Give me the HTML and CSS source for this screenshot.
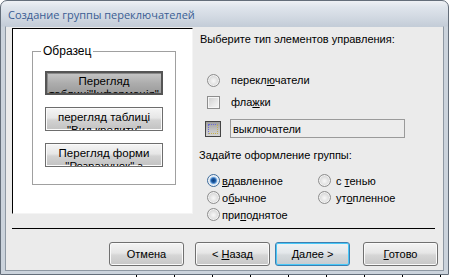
FILE: index.html
```html
<!DOCTYPE html>
<html lang="ru">
<head>
<meta charset="utf-8">
<title>Создание группы переключателей</title>
<link rel="stylesheet" href="styles.css">
</head>
<body>
<div class="window">
  <div class="titlebar">Создание группы переключателей</div>
  <div class="client">
    <div class="main">
      <div class="preview">
        <fieldset class="sample">
          <legend>Образец</legend>
          <div class="tbtn pressed"><span>Перегляд<br>таблиці"Інформація"</span></div>
          <div class="tbtn"><span>перегляд таблиці<br>"Вид кредиту"</span></div>
          <div class="tbtn"><span>Перегляд форми<br>"Розрахунок" з</span></div>
        </fieldset>
      </div>
      <div class="options">
        <div class="heading">Выберите тип элементов управления:</div>
        <div class="opt row-radio"><span class="radio"></span><span class="lbl">перекл<u>ю</u>чатели</span></div>
        <div class="opt row-check"><span class="check"></span><span class="lbl">фла<u>ж</u>ки</span></div>
        <div class="opt row-toggle"><span class="toggle"><span class="focus"></span></span><span class="field">выключатели</span></div>
        <div class="heading heading2">Задайте оформление группы:</div>
        <div class="styles">
          <div class="sopt"><span class="radio on"></span><span class="slbl"><u>в</u>давленное</span></div>
          <div class="sopt col2"><span class="radio"></span><span class="slbl">с <u>т</u>енью</span></div>
          <div class="sopt"><span class="radio"></span><span class="slbl">о<u>б</u>ычное</span></div>
          <div class="sopt col2"><span class="radio"></span><span class="slbl">ут<u>о</u>пленное</span></div>
          <div class="sopt"><span class="radio"></span><span class="slbl">при<u>п</u>однятое</span></div>
        </div>
      </div>
    </div>
    <div class="sep"></div>
    <div class="buttons">
      <button class="btn">Отмена</button>
      <button class="btn back">&lt; <u>Н</u>азад</button>
      <button class="btn next"><u>Д</u>алее &gt;</button>
      <button class="btn done"><u>Г</u>отово</button>
    </div>
  </div>
</div>
</body>
</html>
```
FILE: styles.css
```css
* { box-sizing: border-box; }
html, body { margin: 0; padding: 0; }
body {
  width: 451px;
  height: 277px;
  background-color: #ffffff;
  background-image:
    linear-gradient(#fff, #fff),
    linear-gradient(to right, #000 0, #000 1px, transparent 1px);
  background-size: 130px 3px, 38px 3px;
  background-position: 0 100%, 136px 100%;
  background-repeat: no-repeat, repeat-x;
  font-family: "Liberation Sans", Arial, sans-serif;
  font-size: 11px;
  color: #000;
  overflow: hidden;
}
.window {
  width: 449px;
  height: 275px;
  border: 1px solid #646e7a;
  border-radius: 7px 7px 0 0;
  background: linear-gradient(to bottom, #eef1f5 0px, #dfe5ec 6px, #d2d9e2 16px, #c4cdd8 25px, #cbd3dc 26px, #cbd3dc 100%);
  display: flex;
  flex-direction: column;
}
.titlebar {
  height: 25px;
  padding: 6px 0 0 7px;
  font-family: "Open Sans", "Noto Sans", sans-serif;
  font-size: 11px;
  color: #3a5e94;
  white-space: nowrap;
}
.client {
  flex: 1;
  margin: 0 4px 3px 4px;
  border: 1px solid #8e98a3;
  border-top-color: #c4cdd8;
  background: #ebebeb;
  padding: 1px 0 0 6px;
  display: flex;
  flex-direction: column;
}
.main { display: flex; height: 186px; }
.preview {
  width: 181px;
  height: 186px;
  background: #fff;
  border-top: 1px solid #000;
  border-left: 1px solid #000;
  border-right: 1px solid #f4f4f4;
  border-bottom: 1px solid #f4f4f4;
  padding-left: 19px;
}
.sample {
  margin: 15px 0 0 0;
  width: 144px;
  height: 141px;
  border: 1px solid #a0a0a0;
  padding: 0 12px;
}
.sample legend {
  margin-left: -4px;
  padding: 0 2px;
  line-height: 14px;
  font-size: 12px;
}
.tbtn {
  width: 118px;
  height: 24px;
  margin-top: 12px;
  overflow: hidden;
  text-align: center;
  line-height: 13px;
  padding-top: 3px;
  border: 1px solid #6d6d6d;
  background: linear-gradient(to bottom, #f5f5f5 0%, #e6e6e6 45%, #d2d2d2 55%, #c2c2c2 100%);
  box-shadow: inset 0 0 0 1px #fbfbfb;
  white-space: nowrap;
  font-size: 11.5px;
}
.tbtn.pressed {
  margin-top: 13px;
  border: 2px solid #555;
  padding-top: 2px;
  background: linear-gradient(to bottom, #c6c6c6 0%, #adadad 50%, #9c9c9c 100%);
  box-shadow: inset 1px 1px 0 #8a8a8a;
}
.options {
  margin-left: 7px;
  padding-top: 4px;
  flex: 1;
}
.heading { line-height: 14px; margin-left: 0; white-space: nowrap; }
.opt { display: flex; align-items: center; }
.row-radio { margin-top: 26px; height: 16px; }
.row-check { margin-top: 6px; height: 16px; }
.row-toggle { margin-top: 9px; height: 19px; }
.heading2 { margin-top: 10px; margin-left: -1px; }
.radio {
  width: 13px;
  height: 13px;
  border-radius: 50%;
  border: 1px solid #8d8d8d;
  background: radial-gradient(circle at 50% 55%, #f8f8f8 0, #e6e6e6 3px, #d0d0d0 6px);
  box-shadow: inset 0 0 0 1px #f3f3f3;
  flex: none;
}
.radio.on {
  border-color: #3d6b9b;
  background: radial-gradient(circle at 50% 50%, #0d3c78 0, #1c5aa3 2px, #6fa4dc 3.2px, #cfe2f5 4px, #eef4fb 6px);
}
.opt .radio { margin-left: 7px; }
.check {
  width: 13px;
  height: 13px;
  margin-left: 7px;
  border: 1px solid #8d8d8d;
  background: linear-gradient(135deg, #cdcdcd 0%, #e9e9e9 60%, #f7f7f7 100%);
  box-shadow: inset 0 0 0 1px #f6f6f6;
  flex: none;
}
.lbl { margin-left: 11px; }
.toggle {
  width: 16px;
  height: 16px;
  margin-left: 5px;
  border: 1px solid #444;
  background: linear-gradient(to bottom, #9d9d9d, #c4c4c4 60%, #d4d4d4);
  padding: 2px;
  flex: none;
}
.focus {
  display: block;
  width: 100%;
  height: 100%;
  border: 1px dotted #6a6ad8;
  border-bottom-color: #c8b24a;
  border-right-color: #c8b24a;
}
.field {
  margin-left: 9px;
  width: 175px;
  height: 19px;
  border: 1px solid #9a9a9a;
  background: #ececec;
  padding: 2px 0 0 2px;
  line-height: 14px;
}
.styles {
  margin-top: 10px;
  display: grid;
  grid-template-columns: 111px auto;
  grid-auto-rows: 17px;
}
.sopt { display: flex; align-items: center; }
.sopt .radio { margin-left: 7px; }
.slbl { margin-left: 2px; white-space: nowrap; }
.col2 .slbl { margin-left: 5px; }
.col2 .radio { margin-left: 7px; }
.sep {
  margin-top: 14px;
  width: 423px;
  height: 1px;
  background: #000;
}
.buttons {
  margin-top: 13px;
  display: flex;
  justify-content: flex-end;
  padding-right: 5px;
}
.btn {
  width: 75px;
  height: 24px;
  margin: 0 0 0 11px;
  padding: 0;
  font-family: "Liberation Sans", Arial, sans-serif;
  font-size: 11px;
  color: #000;
  border: 1px solid #707070;
  border-radius: 3px;
  background: linear-gradient(to bottom, #f4f4f4 0%, #e6e6e6 45%, #d6d6d6 55%, #c6c6c6 100%);
  box-shadow: inset 0 0 0 1px #fafafa;
}
.btn.next {
  margin-left: 5px;
  border-color: #3c7fb1;
  box-shadow: inset 0 0 0 1px #48c8f8;
  background: linear-gradient(to bottom, #f0f3f5 0%, #e3e7ea 45%, #d4d9dc 55%, #c6cbcf 100%);
}
.btn.done { margin-left: 13px; }
u { text-decoration: underline; text-underline-offset: 1px; }
```
